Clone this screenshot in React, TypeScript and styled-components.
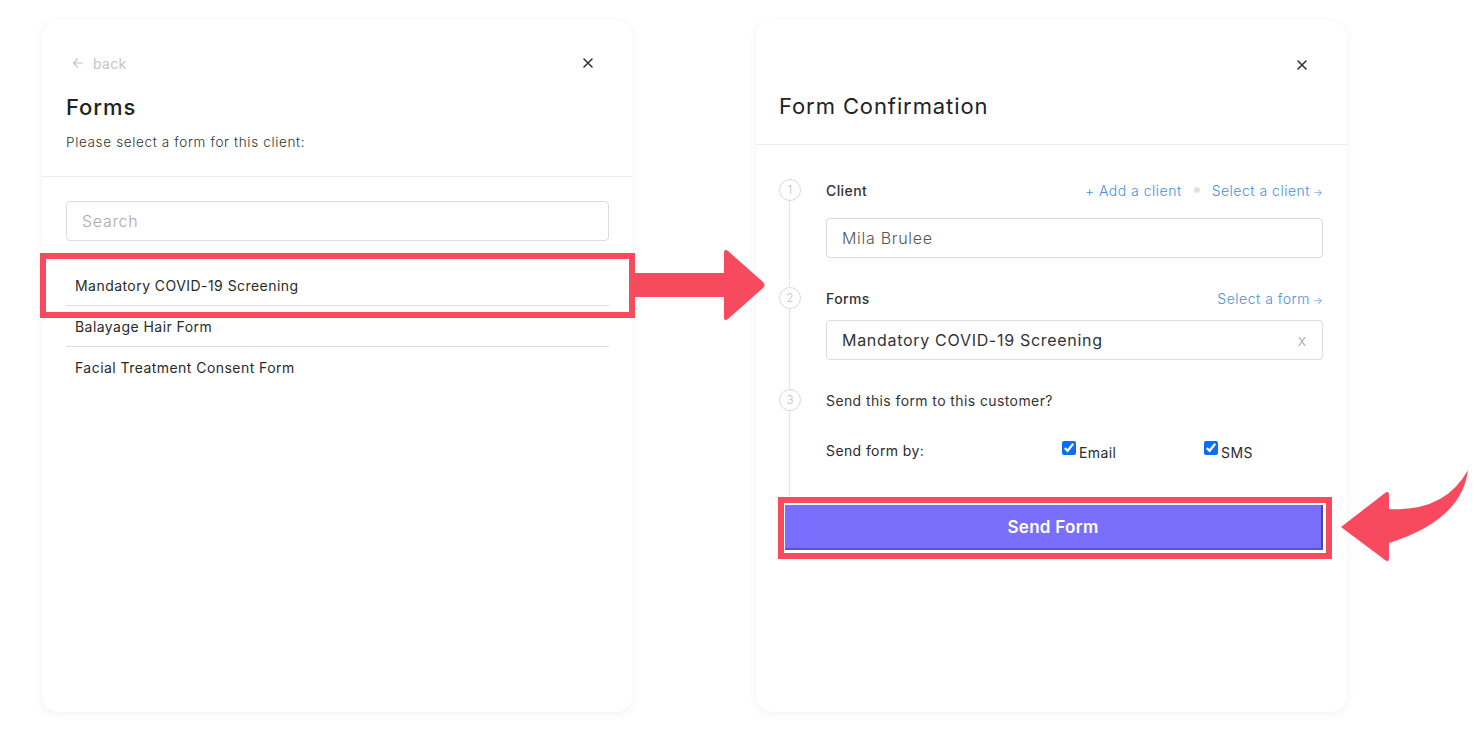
import { FC } from "react";
import styled, { createGlobalStyle } from "styled-components";

const GlobalStyle = createGlobalStyle`
  html, body {
    margin: 0;
    padding: 0;
    background: #ffffff;
    font-family: Inter, "Open Sans", "Liberation Sans", sans-serif;
  }
  * { box-sizing: border-box; }
`;

const Page = styled.div`
  position: relative;
  width: 1482px;
  height: 755px;
  display: flex;
  gap: 123px;
  padding: 20px 0 0 42px;
  overflow: hidden;
`;

const Card = styled.div`
  width: 591px;
  height: 692px;
  background: #fff;
  border-radius: 16px;
  box-shadow: 0 2px 10px rgba(0, 0, 0, 0.05), 0 0 2px rgba(0, 0, 0, 0.04);
  display: flex;
  flex-direction: column;
`;

const Header = styled.div<{ $padX: number }>`
  padding: 0 ${(p) => p.$padX}px 24px;
  border-bottom: 1px solid #ececec;
`;

const TopRow = styled.div<{ $top: number }>`
  height: 20px;
  margin-top: ${(p) => p.$top}px;
  display: flex;
  align-items: center;
  justify-content: space-between;
`;

const Back = styled.div`
  display: flex;
  align-items: center;
  gap: 9px;
  margin-left: 6px;
  color: #c4c4c4;
  font-size: 14px;
  letter-spacing: 0.3px;
`;

const Close = styled.div<{ $right: number }>`
  margin-left: auto;
  margin-right: ${(p) => p.$right}px;
  color: #333;
  display: flex;
`;

const Title = styled.h2<{ $top: number; $weight: number }>`
  margin: ${(p) => p.$top}px 0 0;
  font-size: 22px;
  line-height: 28px;
  font-weight: ${(p) => p.$weight};
  letter-spacing: 0.9px;
  color: #222;
`;

const Subtitle = styled.p`
  margin: 11px 0 0;
  font-size: 13.5px;
  line-height: 20px;
  letter-spacing: 0.65px;
  font-weight: 300;
  color: #333;
`;

const Body = styled.div`
  padding: 24px;
`;

const Field = styled.div<{ $dark?: boolean }>`
  height: 40px;
  border: 1px solid #dcdcdc;
  border-radius: 4px;
  padding: 0 15px;
  display: flex;
  align-items: center;
  justify-content: space-between;
  font-size: 16px;
  letter-spacing: 0.7px;
  font-weight: ${(p) => (p.$dark ? 400 : 300)};
  color: ${(p) => (p.$dark ? "#333" : "#555")};
`;

const Placeholder = styled.span`
  color: #a9a9a9;
  font-weight: 300;
`;

const List = styled.div`
  margin-top: 24px;
`;

const Item = styled.div`
  height: 41px;
  padding-left: 9px;
  display: flex;
  align-items: center;
  font-size: 14px;
  font-weight: 400;
  letter-spacing: 0.45px;
  color: #2a2a2a;
  border-bottom: 1px solid #dedede;
  &:last-child { border-bottom: none; }
`;

const Steps = styled.div`
  position: relative;
  padding: 34px 24px 0 23px;
`;

const Rail = styled.div`
  position: absolute;
  left: 33px;
  top: 56px;
  height: 295px;
  border-left: 1px dotted #cfcfcf;
`;

const Step = styled.div<{ $top: number }>`
  display: grid;
  grid-template-columns: 22px 1fr;
  column-gap: 25px;
  margin-top: ${(p) => p.$top}px;
`;

const Num = styled.div`
  position: relative;
  width: 22px;
  height: 22px;
  border-radius: 50%;
  border: 1px solid #dadada;
  background: #fff;
  color: #bdbdbd;
  font-size: 11px;
  font-weight: 300;
  display: flex;
  align-items: center;
  justify-content: center;
`;

const StepHead = styled.div<{ $weight?: number }>`
  height: 22px;
  display: flex;
  align-items: center;
  justify-content: space-between;
  font-size: 14px;
  font-weight: ${(p) => p.$weight ?? 500};
  letter-spacing: 0.4px;
  color: #333;
`;

const Links = styled.div`
  display: flex;
  align-items: center;
  gap: 12px;
`;

const Link = styled.span`
  color: #4a8fdb;
  font-weight: 300;
  font-size: 14px;
  letter-spacing: 0.5px;
`;

const Arrowlet = styled.span`
  font-size: 10px;
  margin-left: 3px;
`;

const Dot = styled.span`
  width: 6px;
  height: 6px;
  border-radius: 50%;
  background: #e2e2e2;
`;

const StepField = styled.div<{ $top: number }>`
  grid-column: 2;
  margin-top: ${(p) => p.$top}px;
`;

const SendRow = styled.div`
  margin: 28px 0 0 70px;
  height: 22px;
  display: grid;
  grid-template-columns: 236px 142px auto;
  align-items: center;
  font-size: 14px;
  font-weight: 400;
  letter-spacing: 0.4px;
  color: #2a2a2a;
`;

const Check = styled.label`
  display: flex;
  align-items: center;
  gap: 3px;
  input {
    margin: 0;
    width: 14px;
    height: 14px;
    accent-color: #0b6ef9;
    transform: translateY(-2px);
  }
  span { transform: translateY(2px); }
`;

const SendButton = styled.button`
  margin: 44px 24px 0 29px;
  height: 45px;
  border: none;
  border-right: 2px solid #4a41b8;
  border-bottom: 2px solid #5a51d0;
  background: #7a6ffd;
  color: #fff;
  font-family: inherit;
  font-size: 17px;
  font-weight: 600;
  letter-spacing: 0.3px;
`;

const Highlight = styled.div<{ $x: number; $y: number; $w: number; $h: number }>`
  position: absolute;
  left: ${(p) => p.$x}px;
  top: ${(p) => p.$y}px;
  width: ${(p) => p.$w}px;
  height: ${(p) => p.$h}px;
  border: 6px solid #f74a5f;
  pointer-events: none;
`;

const Overlay = styled.svg`
  position: absolute;
  left: 0;
  top: 0;
  pointer-events: none;
`;

const XIcon: FC<{ size: number }> = ({ size }) => (
  <svg width={size} height={size} viewBox="0 0 12 12" fill="none" stroke="currentColor" strokeWidth="1.6" strokeLinecap="round">
    <path d="M2 2l8 8M10 2l-8 8" />
  </svg>
);

const BackArrow = () => (
  <svg width="12" height="12" viewBox="0 0 12 12" fill="none" stroke="#c4c4c4" strokeWidth="1.2" strokeLinecap="round" strokeLinejoin="round">
    <path d="M10.5 6H1.5M5.5 2L1.5 6l4 4" />
  </svg>
);

const forms = ["Mandatory COVID-19 Screening", "Balayage Hair Form", "Facial Treatment Consent Form"];

const App: FC = () => {
  return (
    <Page>
      <GlobalStyle />
      <Card>
        <Header $padX={24}>
          <TopRow $top={33}>
            <Back>
              <BackArrow />
              back
            </Back>
            <Close $right={15}>
              <XIcon size={12} />
            </Close>
          </TopRow>
          <Title $top={20} $weight={500}>Forms</Title>
          <Subtitle>Please select a form for this client:</Subtitle>
        </Header>
        <Body>
          <Field>
            <Placeholder>Search</Placeholder>
          </Field>
          <List>
            {forms.map((f) => (
              <Item key={f}>{f}</Item>
            ))}
          </List>
        </Body>
      </Card>

      <Card>
        <Header $padX={23}>
          <TopRow $top={35}>
            <Close $right={16}>
              <XIcon size={12} />
            </Close>
          </TopRow>
          <Title $top={17} $weight={400}>Form Confirmation</Title>
        </Header>
        <Steps>
          <Rail />
          <Step $top={0}>
            <Num>1</Num>
            <StepHead>
              Client
              <Links>
                <Link>+ Add a client</Link>
                <Dot />
                <Link>
                  Select a client<Arrowlet>→</Arrowlet>
                </Link>
              </Links>
            </StepHead>
            <StepField $top={17}>
              <Field>Mila Brulee</Field>
            </StepField>
          </Step>
          <Step $top={29}>
            <Num>2</Num>
            <StepHead>
              Forms
              <Link>
                Select a form<Arrowlet>→</Arrowlet>
              </Link>
            </StepHead>
            <StepField $top={11}>
              <Field $dark>
                Mandatory COVID-19 Screening
                <Placeholder>x</Placeholder>
              </Field>
            </StepField>
          </Step>
          <Step $top={29}>
            <Num>3</Num>
            <StepHead $weight={400}>Send this form to this customer?</StepHead>
          </Step>
        </Steps>
        <SendRow>
          Send form by:
          <Check>
            <input type="checkbox" checked readOnly />
            <span>Email</span>
          </Check>
          <Check>
            <input type="checkbox" checked readOnly />
            <span>SMS</span>
          </Check>
        </SendRow>
        <SendButton>Send Form</SendButton>
      </Card>

      <Highlight $x={40} $y={253} $w={595} $h={65} />
      <Highlight $x={778} $y={497} $w={554} $h={62} />

      <Overlay width="1482" height="755" viewBox="0 0 1482 755">
        <path
          d="M633 273H724V253Q724 248 728 251L763 282Q766 285 763 288L728 319Q724 322 724 317V297H633Z"
          fill="#f74a5f"
        />
        <path
          d="M1341 527L1385 493Q1389 490 1389 495V509Q1445 512 1468 470Q1462 520 1389 543V558Q1389 563 1385 560Z"
          fill="#f74a5f"
        />
      </Overlay>
    </Page>
  );
};

export default App;
